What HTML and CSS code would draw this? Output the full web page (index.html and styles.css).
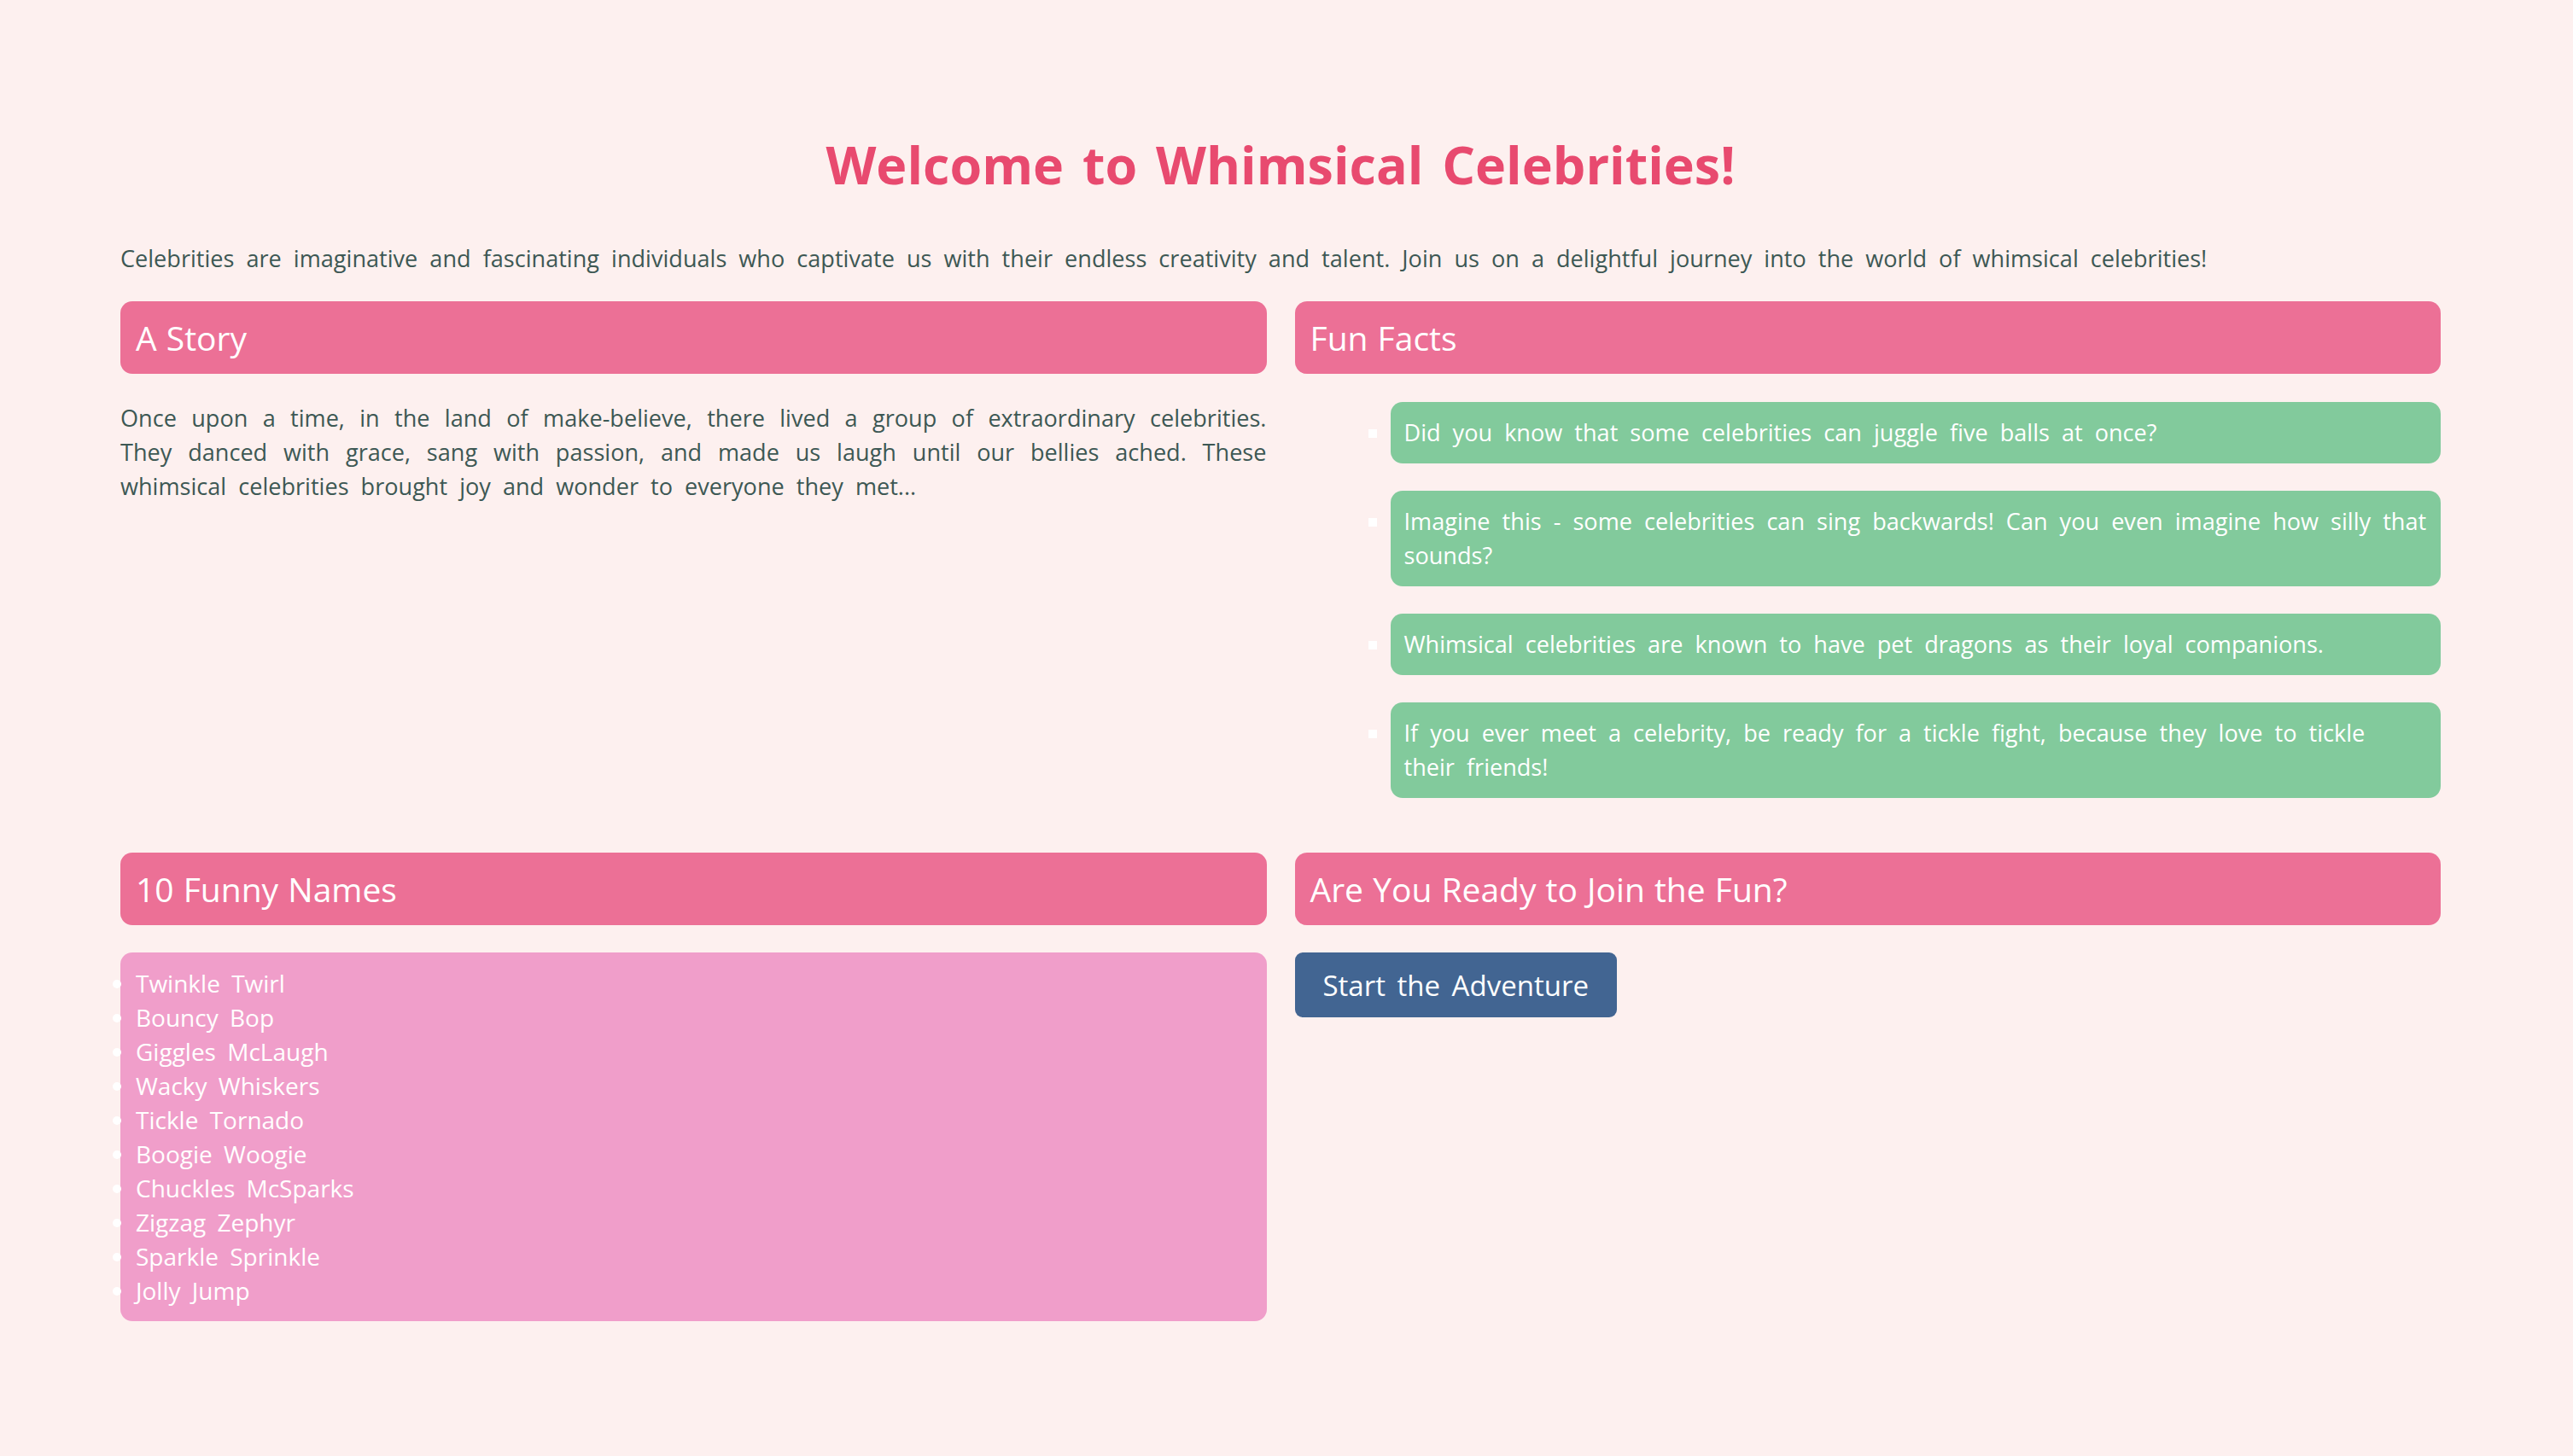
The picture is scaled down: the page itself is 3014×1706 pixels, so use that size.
FILE: index.html
```html
<!DOCTYPE html>
<html lang="en">
<head>
<meta charset="utf-8">
<title>Whimsical Celebrities</title>
<link rel="stylesheet" href="styles.css">
</head>
<body>
<div class="page">
  <h1 class="title">Welcome to Whimsical Celebrities!</h1>
  <p class="intro">Celebrities are imaginative and fascinating individuals who captivate us with their endless creativity and talent. Join us on a delightful journey into the world of whimsical celebrities!</p>
  <div class="grid">
    <section class="section">
      <h2 class="section-title">A Story</h2>
      <p class="story">Once upon a time, in the land of make-believe, there lived a group of extraordinary celebrities. They danced with grace, sang with passion, and made us laugh until our bellies ached. These whimsical celebrities brought joy and wonder to everyone they met...</p>
    </section>
    <section class="section">
      <h2 class="section-title">Fun Facts</h2>
      <ul class="facts">
        <li>Did you know that some celebrities can juggle five balls at once?</li>
        <li>Imagine this - some celebrities can sing backwards! Can you even imagine how silly that sounds?</li>
        <li>Whimsical celebrities are known to have pet dragons as their loyal companions.</li>
        <li>If you ever meet a celebrity, be ready for a tickle fight, because they love to tickle their friends!</li>
      </ul>
    </section>
    <section class="section">
      <h2 class="section-title">10 Funny Names</h2>
      <ul class="names">
        <li>Twinkle Twirl</li>
        <li>Bouncy Bop</li>
        <li>Giggles McLaugh</li>
        <li>Wacky Whiskers</li>
        <li>Tickle Tornado</li>
        <li>Boogie Woogie</li>
        <li>Chuckles McSparks</li>
        <li>Zigzag Zephyr</li>
        <li>Sparkle Sprinkle</li>
        <li>Jolly Jump</li>
      </ul>
    </section>
    <section class="section">
      <h2 class="section-title">Are You Ready to Join the Fun?</h2>
      <div class="cta"><button class="button" type="button">Start the Adventure</button></div>
    </section>
  </div>
</div>
</body>
</html>
```
FILE: styles.css
```css
html, body {
  margin: 0;
  padding: 0;
}

body {
  background: #fdf0ef;
  color: #3d5854;
  font-family: "Open Sans", "Noto Sans", "DejaVu Sans", sans-serif;
  font-size: 27.1px;
  line-height: 40px;
  word-spacing: 7px;
}

.page {
  padding: 153px 155px 100px 141px;
}

.title {
  margin: 0;
  text-align: center;
  color: #e84a6f;
  font-size: 61px;
  line-height: 80px;
  font-weight: 700;
  word-spacing: 6px;
}

.intro {
  margin: 50px 0 30px;
}

.grid {
  display: grid;
  grid-template-columns: 1fr 1fr;
  column-gap: 33px;
  row-gap: 64px;
  align-items: start;
}

.section-title {
  margin: 0;
  background: #ec7096;
  color: #ffffff;
  border-radius: 14px;
  padding: 16px 18px;
  font-size: 39px;
  line-height: 53px;
  font-weight: 400;
  word-spacing: 1px;
}

.story {
  margin: 32px 0 0;
  text-align: justify;
}

.facts {
  margin: 33px 0 0;
  padding: 0 0 0 112px;
  list-style: square;
  color: #ffffff;
}

.facts li {
  background: #82ca9c;
  border-radius: 14px;
  padding: 16px;
  margin-bottom: 32px;
}

.facts li:last-child {
  margin-bottom: 0;
}

.names {
  margin: 32px 0 0;
  padding: 16px 18px;
  background: #f09eca;
  border-radius: 14px;
  color: #ffffff;
  font-size: 28px;
  word-spacing: 6px;
  list-style: disc;
  list-style-position: outside;
}

.cta {
  margin-top: 32px;
}

.button {
  background: #426592;
  color: #ffffff;
  border: none;
  border-radius: 9px;
  height: 76px;
  padding: 0 33px;
  font-family: inherit;
  font-size: 33px;
  word-spacing: 5px;
  cursor: pointer;
}
```
